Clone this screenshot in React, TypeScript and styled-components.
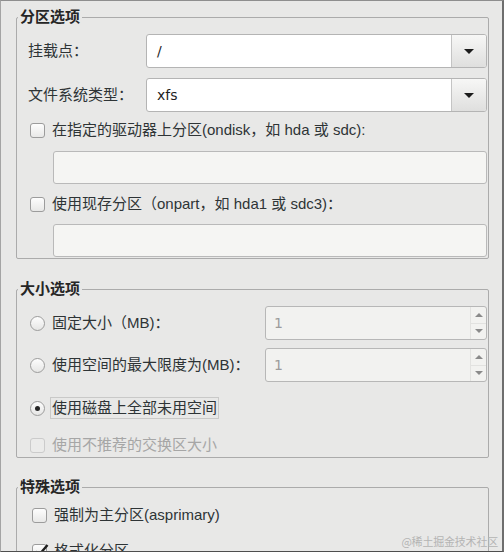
import React from "react";
import styled, { createGlobalStyle } from "styled-components";

const GlobalStyle = createGlobalStyle`
  html, body { margin: 0; padding: 0; background: #e8e8e7; }
  body {
    font-family: "Liberation Sans", "Noto Sans CJK SC", sans-serif;
    font-size: 15px;
    color: #2e3436;
  }
  * { box-sizing: border-box; }
`;

const Window = styled.div`
  position: relative;
  width: 504px;
  height: 552px;
  overflow: hidden;
  background: #e8e8e7;
  border-top: 1px solid #8e8e8e;
  border-left: 1px solid #a4a4a4;
  border-right: 2px solid #6e6e6e;
  border-bottom: 1px solid #4e4e4e;
  padding: 5px 13px 0 15px;
`;

const Frame = styled.fieldset<{ $gap?: number }>`
  margin: ${(p) => p.$gap ?? 0}px 0 0;
  padding: 0;
  border: 1px solid #ababab;
  border-radius: 2px;
  min-width: 0;
`;

const FrameTitle = styled.legend`
  margin-left: 1px;
  padding: 0 2px;
  font-weight: bold;
  font-size: 15px;
  line-height: 22px;
  color: #262626;
`;

const FrameBody = styled.div<{ $pl?: number; $pb?: number }>`
  display: flex;
  flex-direction: column;
  padding: 6px 1px ${(p) => p.$pb ?? 1}px ${(p) => p.$pl ?? 11}px;
`;

const FieldRow = styled.div<{ $label: number; $mt?: number }>`
  display: grid;
  grid-template-columns: ${(p) => p.$label}px 1fr;
  align-items: center;
  margin-top: ${(p) => p.$mt ?? 0}px;
`;

const Label = styled.span`
  line-height: 22px;
  color: #2e3436;
`;

const Combo = styled.div`
  display: flex;
  height: 34px;
  border: 1px solid #b4b4b4;
  border-radius: 3px;
  background: #ffffff;
  overflow: hidden;
`;

const ComboText = styled.div`
  flex: 1;
  display: flex;
  align-items: center;
  padding-left: 10px;
  font-family: "DejaVu Sans", sans-serif;
  font-size: 14px;
  color: #1e1e1e;
`;

const ComboButton = styled.div`
  width: 35px;
  flex: none;
  display: flex;
  align-items: center;
  justify-content: center;
  border-left: 1px solid #c4c4c4;
  background: linear-gradient(#f7f7f6, #dfdfde);
`;

const OptionRow = styled.div<{ $mt: number; $h?: number; $disabled?: boolean }>`
  display: flex;
  align-items: center;
  gap: 7px;
  height: ${(p) => p.$h ?? 24}px;
  margin-top: ${(p) => p.$mt}px;
  padding-left: 2px;
  color: ${(p) => (p.$disabled ? "#a6a6a6" : "#2e3436")};
  line-height: 22px;
  white-space: nowrap;
`;

const CheckBox = styled.span<{ $disabled?: boolean }>`
  position: relative;
  flex: none;
  width: 15px;
  height: 15px;
  border: 1px solid ${(p) => (p.$disabled ? "#cbcbcb" : "#9c9c9c")};
  border-radius: 3px;
  background: ${(p) =>
    p.$disabled ? "#ebebea" : "linear-gradient(#fdfdfd, #e8e8e7)"};
`;

const CheckMark = styled.svg`
  position: absolute;
  left: 0px;
  top: -3px;
  width: 16px;
  height: 16px;
`;

const Radio = styled.span<{ $checked?: boolean }>`
  flex: none;
  width: 15px;
  height: 15px;
  border: 1px solid #9c9c9c;
  border-radius: 50%;
  background: linear-gradient(#fdfdfd, #e6e6e5);
  display: flex;
  align-items: center;
  justify-content: center;
  &::after {
    content: "";
    width: 5px;
    height: 5px;
    border-radius: 50%;
    background: ${(p) => (p.$checked ? "#262626" : "transparent")};
  }
`;

const FocusText = styled.span`
  margin-left: -2px;
  padding: 0 1px;
  border: 1px solid #c9c9c8;
  line-height: 20px;
`;

const Entry = styled.div<{ $mt: number }>`
  height: 33px;
  margin: ${(p) => p.$mt}px 0 0 25px;
  border: 1px solid #b9b9b9;
  border-radius: 3px;
  background: #f5f5f3;
`;

const Spin = styled.div`
  display: flex;
  height: 34px;
  border: 1px solid #b7b7b7;
  border-radius: 3px;
  background: #f2f2f0;
  overflow: hidden;
`;

const SpinValue = styled.div`
  flex: 1;
  display: flex;
  align-items: center;
  padding-left: 8px;
  font-family: "DejaVu Sans", sans-serif;
  font-size: 14px;
  color: #9c9c9c;
`;

const SpinButtons = styled.div`
  width: 16px;
  flex: none;
  display: flex;
  flex-direction: column;
  border-left: 1px solid #e2e2e0;
`;

const SpinButton = styled.div`
  flex: 1;
  display: flex;
  align-items: center;
  justify-content: center;
  & + & {
    border-top: 1px solid #e2e2e0;
  }
`;

const Watermark = styled.div`
  position: absolute;
  right: 4px;
  bottom: 3px;
  font-family: "Noto Sans CJK SC", sans-serif;
  font-size: 11px;
  line-height: 14px;
  color: #b4b4b4;
  letter-spacing: -0.2px;
`;

const DownArrow = ({ color = "#1c1c1c", w = 10, h = 5 }: { color?: string; w?: number; h?: number }) => (
  <svg width={w} height={h} viewBox={`0 0 ${w} ${h}`}>
    <polygon points={`0,0 ${w},0 ${w / 2},${h}`} fill={color} />
  </svg>
);

const UpArrow = ({ color = "#8a8a8a", w = 8, h = 4 }: { color?: string; w?: number; h?: number }) => (
  <svg width={w} height={h} viewBox={`0 0 ${w} ${h}`}>
    <polygon points={`0,${h} ${w},${h} ${w / 2},0`} fill={color} />
  </svg>
);

const Check = ({ checked, disabled }: { checked?: boolean; disabled?: boolean }) => (
  <CheckBox $disabled={disabled}>
    {checked && (
      <CheckMark viewBox="0 0 16 16">
        <path d="M2.5 9.5 L6 13 L14.5 3" fill="none" stroke="#1e1e1e" strokeWidth="2.4" />
      </CheckMark>
    )}
  </CheckBox>
);

const ComboBox = ({ value }: { value: string }) => (
  <Combo>
    <ComboText>{value}</ComboText>
    <ComboButton>
      <DownArrow />
    </ComboButton>
  </Combo>
);

const SpinBox = ({ value }: { value: string }) => (
  <Spin>
    <SpinValue>{value}</SpinValue>
    <SpinButtons>
      <SpinButton>
        <UpArrow />
      </SpinButton>
      <SpinButton>
        <DownArrow color="#8a8a8a" w={8} h={4} />
      </SpinButton>
    </SpinButtons>
  </Spin>
);

export default function App() {
  return (
    <>
      <GlobalStyle />
      <Window>
        <Frame>
          <FrameTitle>分区选项</FrameTitle>
          <FrameBody>
            <FieldRow $label={118}>
              <Label>挂载点：</Label>
              <ComboBox value="/" />
            </FieldRow>
            <FieldRow $label={118} $mt={10}>
              <Label>文件系统类型：</Label>
              <ComboBox value="xfs" />
            </FieldRow>
            <OptionRow $mt={6}>
              <Check />
              <span>在指定的驱动器上分区(ondisk，如 hda 或 sdc):</span>
            </OptionRow>
            <Entry $mt={9} />
            <OptionRow $mt={8}>
              <Check />
              <span>使用现存分区（onpart，如 hda1 或 sdc3)：</span>
            </OptionRow>
            <Entry $mt={8} />
          </FrameBody>
        </Frame>

        <Frame $gap={19}>
          <FrameTitle>大小选项</FrameTitle>
          <FrameBody>
            <FieldRow $label={237}>
              <OptionRow $mt={0}>
                <Radio />
                <span>固定大小（MB)：</span>
              </OptionRow>
              <SpinBox value="1" />
            </FieldRow>
            <FieldRow $label={237} $mt={8}>
              <OptionRow $mt={0}>
                <Radio />
                <span>使用空间的最大限度为(MB)：</span>
              </OptionRow>
              <SpinBox value="1" />
            </FieldRow>
            <OptionRow $mt={14}>
              <Radio $checked />
              <FocusText>使用磁盘上全部未用空间</FocusText>
            </OptionRow>
            <OptionRow $mt={14} $h={22} $disabled>
              <Check disabled />
              <span>使用不推荐的交换区大小</span>
            </OptionRow>
          </FrameBody>
        </Frame>

        <Frame $gap={18}>
          <FrameTitle>特殊选项</FrameTitle>
          <FrameBody $pl={13}>
            <OptionRow $mt={0} $h={22}>
              <Check />
              <span>强制为主分区(asprimary)</span>
            </OptionRow>
            <OptionRow $mt={14} $h={22}>
              <Check checked />
              <span>格式化分区</span>
            </OptionRow>
          </FrameBody>
        </Frame>

        <Watermark>@稀土掘金技术社区</Watermark>
      </Window>
    </>
  );
}
